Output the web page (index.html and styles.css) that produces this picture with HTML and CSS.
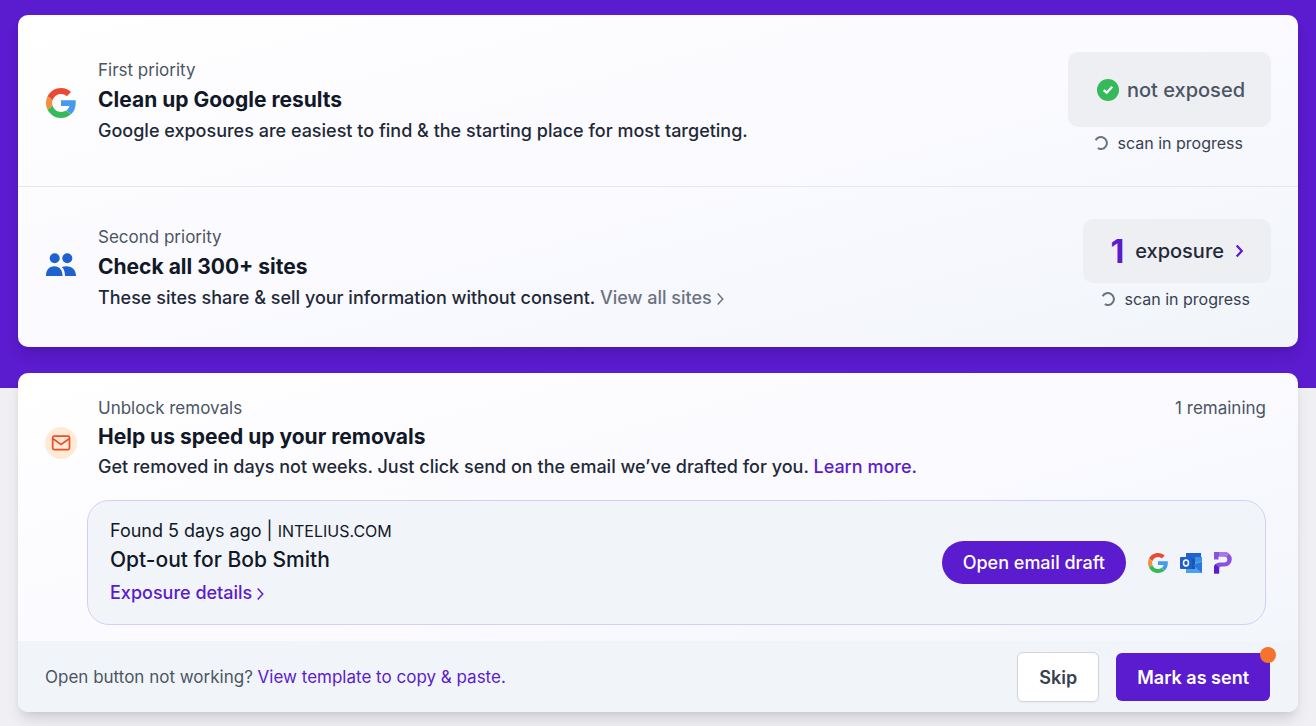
FILE: index.html
```html
<!DOCTYPE html>
<html lang="en">
<head>
<meta charset="utf-8">
<title>Removal priorities</title>
<link rel="stylesheet" href="styles.css">
</head>
<body>
<svg class="defs" aria-hidden="true">
  <symbol id="google" viewBox="0 0 48 48">
    <path fill="#ea4a35" d="M24 9.5c3.54 0 6.71 1.22 9.21 3.6l6.85-6.85C35.9 2.38 30.47 0 24 0 14.62 0 6.51 5.38 2.56 13.22l7.98 6.19C12.43 13.72 17.74 9.5 24 9.5z"/>
    <path fill="#4599ee" d="M47.5 24v-4.5H24v9.3h13.4c-.6 3-2.3 5.5-4.8 7.2l7.73 6C44.84 37.85 47.5 31.5 47.5 24z"/>
    <path fill="#f68f3c" d="M10.53 28.59c-.48-1.45-.76-2.99-.76-4.59s.27-3.14.76-4.59l-7.98-6.19C.92 16.46 0 20.12 0 24s.92 7.54 2.56 10.78l7.97-6.19z"/>
    <path fill="#35b95a" d="M24 48c6.48 0 11.93-2.13 15.89-5.81l-7.73-6c-2.15 1.45-4.92 2.3-8.16 2.3-6.26 0-11.57-4.22-13.47-9.91l-7.98 6.19C6.51 42.62 14.62 48 24 48z"/>
  </symbol>
  <symbol id="chevron" viewBox="0 0 8 12">
    <path d="M1.500 1.200 6 6 1.500 10.800" fill="none" stroke="currentColor"/>
  </symbol>
  <symbol id="spinner" viewBox="0 0 14 14">
    <path d="M1.6 4.2A6 6 0 1 1 3.8 12.2" fill="none" stroke="currentColor" stroke-width="2"/>
  </symbol>
</svg>

<main class="page">
  <section class="card">
    <div class="row row-first">
      <svg class="row-icon icon-google" viewBox="0 0 32 34" aria-hidden="true"><use href="#google" x="1" y="2" width="30" height="30"/></svg>
      <div class="row-text">
        <p class="label">First priority</p>
        <h2 class="title">Clean up Google results</h2>
        <p class="desc">Google exposures are easiest to find &amp; the starting place for most targeting.</p>
      </div>
      <div class="stat">
        <div class="stat-box stat-clear">
          <svg class="check" viewBox="0 0 22 22" aria-hidden="true"><circle cx="11" cy="11" r="11" fill="#35b95a"/><path d="M6.7 11.1 9.7 13.7 15.2 7.7" fill="none" stroke="#fff" stroke-width="2.3"/></svg>
          <span>not exposed</span>
        </div>
        <p class="scan"><svg class="spinner" aria-hidden="true"><use href="#spinner"/></svg>scan in progress</p>
      </div>
    </div>
    <div class="row row-second">
      <svg class="row-icon icon-people" viewBox="0 0 32 24" fill="#1e62d0" aria-hidden="true">
        <circle cx="9.7" cy="5.2" r="5"/><circle cx="22.3" cy="5.2" r="5"/>
        <path d="M1 23c0-6 3-9.8 8.3-9.8s8.3 3.8 8.3 9.8zM16.800 13.900c1.300-.5 2.700-.7 4.400-.7 6.300 0 9.800 3.800 9.800 9.800h-11c0-4-.8-6.900-3.200-9.100z"/>
      </svg>
      <div class="row-text">
        <p class="label">Second priority</p>
        <h2 class="title">Check all 300+ sites</h2>
        <p class="desc">These sites share &amp; sell your information without consent. <a class="link-muted" href="#sites">View all sites<svg class="chev" aria-hidden="true"><use href="#chevron"/></svg></a></p>
      </div>
      <div class="stat">
        <a class="stat-box stat-found" href="#exposures">
          <strong class="count">1</strong>
          <span>exposure</span>
          <svg class="chev chev-bold" aria-hidden="true"><use href="#chevron"/></svg>
        </a>
        <p class="scan"><svg class="spinner" aria-hidden="true"><use href="#spinner"/></svg>scan in progress</p>
      </div>
    </div>
  </section>

  <section class="card">
    <div class="row row-unblock">
      <svg class="row-icon icon-mail" viewBox="0 0 32 38" aria-hidden="true">
        <circle cx="16" cy="19" r="16" fill="#feebd6"/>
        <g fill="none" stroke="#f04c2b" stroke-width="1.7"><rect x="7.7" y="12.2" width="16.8" height="13.4" rx="1.5"/><path d="M8 14.8 16 20.4 24.2 14.8"/></g>
      </svg>
      <div class="row-text">
        <p class="label">Unblock removals</p>
        <h2 class="title">Help us speed up your removals</h2>
        <p class="desc">Get removed in days not weeks. Just click send on the email we’ve drafted for you. <a class="link" href="#learn">Learn more.</a></p>
      </div>
      <p class="label remaining">1 remaining</p>
    </div>
    <article class="draft">
      <div class="draft-text">
        <p class="found">Found 5 days ago | <span class="domain">INTELIUS.COM</span></p>
        <h3 class="draft-title">Opt-out for Bob Smith</h3>
        <a class="link details" href="#details">Exposure details<svg class="chev" aria-hidden="true"><use href="#chevron"/></svg></a>
      </div>
      <button class="btn-draft" type="button">Open email draft</button>
      <div class="clients">
        <svg class="client" viewBox="0 0 20 20" aria-hidden="true"><use href="#google" width="20" height="20"/></svg>
        <svg class="client client-outlook" viewBox="0 0 22 22" aria-hidden="true">
          <path fill="#1f63cd" d="M6 1h15v9H6z"/><path fill="#3d8fe6" d="M14 5h8v6h-8z"/><path fill="#1f63cd" d="M6 5h9v9H6z"/>
          <path fill="#48a0ef" d="M6 13l8-3 8-1v12H6z"/><path fill="#1b56b5" d="M8 7h7v10H8z"/><path fill="#2b78da" d="m13 13 9 8V10z"/>
          <rect x="0" y="5" width="12" height="12" rx="1" fill="#1e5fc9"/>
          <ellipse cx="6" cy="11" rx="2.5" ry="2.9" fill="none" stroke="#fff" stroke-width="1.5"/>
        </svg>
        <svg class="client client-proton" viewBox="0 0 18 22" aria-hidden="true">
          <path fill="#8a50df" d="M0 0h10.500a7.300 7.300 0 0 1 0 14.600H7.500a2.500 2.500 0 0 0-2.500 2.500V21.500H0v-5.500a5.500 5.500 0 0 1 5.500-5.500h4.800a3 3 0 0 0 0-6H4.500v3H0z"/>
          <path fill="#5b1bce" d="M0 15a5.500 5.500 0 0 1 1.500-3L5.200 16V21.500H0z"/>
          <path fill="#a57ae8" d="M5 0h5.500a7.300 7.300 0 0 1 4.700 1.700L12.400 5.400a3 3 0 0 0-2.100-.9H5z"/>
        </svg>
      </div>
    </article>
    <footer class="foot">
      <p class="help">Open button not working? <a class="link" href="#template">View template to copy &amp; paste.</a></p>
      <button class="btn btn-skip" type="button">Skip</button>
      <div class="sent"><button class="btn btn-sent" type="button">Mark as sent</button><span class="dot"></span></div>
    </footer>
  </section>
</main>
</body>
</html>
```

FILE: styles.css
```css
:root {
  --purple: #5b1bce;
  --ink: #111827;
  --body: #1f2937;
  --muted: #4b5563;
}

* { box-sizing: border-box; }

body {
  margin: 0;
  background: linear-gradient(var(--purple) 388px, #efeff4 388px) no-repeat #efeff4;
  color: var(--body);
  font-family: Inter, "Liberation Sans", sans-serif;
  font-size: 18px;
}

p, h2, h3 { margin: 0; }
a { text-decoration: none; color: inherit; }
button { font: inherit; cursor: pointer; }
.defs { position: absolute; width: 0; height: 0; }

.page {
  display: flex;
  flex-direction: column;
  gap: 26px;
  padding: 15px 18px 14px;
}

.card {
  border-radius: 10px;
  background: linear-gradient(to bottom right, #fff, #fafaff 50%, #f1f5f9);
  box-shadow: 0 10px 15px -3px rgba(0, 0, 0, 0.12), 0 4px 6px -2px rgba(0, 0, 0, 0.06);
}

.row {
  display: flex;
  align-items: flex-start;
  gap: 21px;
  padding: 32px 27px;
}
.row-first {
  padding: 37px 27px 27px;
  border-bottom: 1px solid #e5e7eb;
}
.row-unblock { padding: 17px 32px 18px 27px; }

.row-icon { flex: none; width: 32px; margin-top: 34px; }
.icon-google { height: 34px; }
.icon-people { height: 24px; }
.icon-mail { height: 38px; }

.row-text { flex: 1; padding-top: 4px; }
.label { color: var(--muted); font-size: 17px; line-height: 28px; }
.title { color: var(--ink); font-size: 21px; font-weight: 700; line-height: 32px; }
.row-unblock .title { line-height: 30px; }
.desc { font-weight: 500; line-height: 30px; }
.remaining { padding-top: 4px; }

.link { color: var(--purple); }
.link-muted { color: #6b7280; }
.chev { width: 9px; height: 14px; margin-left: 4px; stroke-width: 1.3; vertical-align: -2px; }

.stat { display: flex; flex-direction: column; align-items: flex-end; }
.stat-box {
  display: flex;
  align-items: center;
  border-radius: 10px;
  background: #eeeff3;
  font-size: 20px;
  font-weight: 500;
}
.stat-clear { gap: 8px; height: 75px; padding: 0 26px 0 29px; color: var(--muted); }
.stat-found { gap: 11px; height: 64px; padding: 0 27px; }
.stat-found .chev { margin: 0; }
.count { color: var(--purple); font-size: 32px; font-weight: 700; }
.chev-bold { color: var(--purple); stroke-width: 2; }
.check { width: 22px; height: 22px; }
.scan {
  display: flex;
  align-items: center;
  gap: 10px;
  padding-right: 28px;
  color: #374151;
  font-size: 16px;
  line-height: 32px;
}
.stat-found + .scan { padding-right: 21px; }
.spinner { width: 14px; height: 14px; color: #6b7280; }

.draft {
  display: flex;
  align-items: center;
  margin: 0 32px 16px 69px;
  padding: 16px 33px 16px 22px;
  border: 1px solid #d6cef8;
  border-radius: 22px;
  background: #f1f5f9;
  color: var(--ink);
}
.draft-text { flex: 1; }
.found { line-height: 28px; }
.domain { font-size: 16px; }
.draft-title { font-size: 21px; font-weight: 500; line-height: 30px; }
.details { display: inline-block; margin-top: 3px; font-weight: 500; line-height: 30px; vertical-align: top; }
.btn-draft {
  height: 43px;
  padding: 0 21px;
  border: 0;
  border-radius: 22px;
  background: var(--purple);
  color: #fff;
  font-weight: 500;
}
.clients { display: flex; align-items: center; gap: 12px; margin-left: 22px; }
.client { width: 20px; height: 20px; }
.client-outlook { width: 22px; height: 22px; }
.client-proton { width: 18px; height: 22px; }

.foot {
  display: flex;
  align-items: center;
  gap: 17px;
  padding: 11px 28px 10px 27px;
  border-radius: 0 0 10px 10px;
  background: #f1f5f9;
}
.help { flex: 1; color: var(--muted); font-size: 17px; }
.btn {
  padding: 0 21px;
  border-radius: 6px;
  font-size: 18px;
  font-weight: 600;
}
.btn-skip {
  height: 50px;
  border: 1px solid #d1d5db;
  background: #fff;
  color: #374151;
  box-shadow: 0 1px 2px rgba(0, 0, 0, 0.05);
}
.sent { position: relative; }
.btn-sent { height: 48px; border: 0; background: var(--purple); color: #fff; }
.dot {
  position: absolute;
  top: -6px;
  right: -6px;
  width: 16px;
  height: 16px;
  border-radius: 50%;
  background: #f4732f;
}
```
